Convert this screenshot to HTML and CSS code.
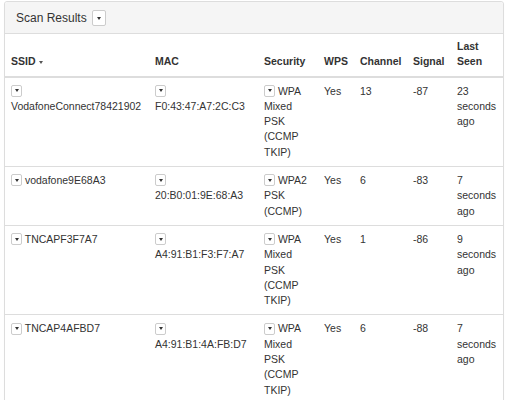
FILE: index.html
```html
<!DOCTYPE html>
<html>
<head>
<meta charset="utf-8">
<link rel="stylesheet" href="styles.css">
</head>
<body>
<div class="page">
  <div class="panel">
    <div class="panel-heading">
      <span class="title">Scan Results</span>
      <span class="btn btn-lg"><span class="caret"></span></span>
    </div>
    <table class="table">
      <colgroup>
        <col class="c-ssid"><col class="c-mac"><col class="c-sec"><col class="c-wps"><col class="c-ch"><col class="c-sig"><col class="c-seen">
      </colgroup>
      <thead>
        <tr>
          <th>SSID <span class="caret sort"></span></th>
          <th>MAC</th>
          <th>Security</th>
          <th>WPS</th>
          <th>Channel</th>
          <th>Signal</th>
          <th>Last Seen</th>
        </tr>
      </thead>
      <tbody>
        <tr>
          <td><span class="btn"><span class="caret"></span></span> VodafoneConnect78421902</td>
          <td><span class="btn"><span class="caret"></span></span> F0:43:47:A7:2C:C3</td>
          <td><span class="btn"><span class="caret"></span></span> WPA Mixed PSK (CCMP TKIP)</td>
          <td>Yes</td>
          <td>13</td>
          <td>-87</td>
          <td>23 seconds ago</td>
        </tr>
        <tr>
          <td><span class="btn"><span class="caret"></span></span> vodafone9E68A3</td>
          <td><span class="btn"><span class="caret"></span></span> 20:B0:01:9E:68:A3</td>
          <td><span class="btn"><span class="caret"></span></span> WPA2 PSK (CCMP)</td>
          <td>Yes</td>
          <td>6</td>
          <td>-83</td>
          <td>7 seconds ago</td>
        </tr>
        <tr>
          <td><span class="btn"><span class="caret"></span></span> TNCAPF3F7A7</td>
          <td><span class="btn"><span class="caret"></span></span> A4:91:B1:F3:F7:A7</td>
          <td><span class="btn"><span class="caret"></span></span> WPA Mixed PSK (CCMP TKIP)</td>
          <td>Yes</td>
          <td>1</td>
          <td>-86</td>
          <td>9 seconds ago</td>
        </tr>
        <tr>
          <td><span class="btn"><span class="caret"></span></span> TNCAP4AFBD7</td>
          <td><span class="btn"><span class="caret"></span></span> A4:91:B1:4A:FB:D7</td>
          <td><span class="btn"><span class="caret"></span></span> WPA Mixed PSK (CCMP TKIP)</td>
          <td>Yes</td>
          <td>6</td>
          <td>-88</td>
          <td>7 seconds ago</td>
        </tr>
      </tbody>
    </table>
  </div>
</div>
</body>
</html>
```
FILE: styles.css
```css
html, body {
  margin: 0;
  padding: 0;
  background: #fff;
}
body {
  font-family: "Liberation Sans", Arial, Helvetica, sans-serif;
  font-size: 10.5px;
  line-height: 15.3px;
  color: #333;
}
.page {
  box-sizing: border-box;
  height: 400px;
  padding: 1px 1px 0 4px;
  overflow: hidden;
}
.panel {
  border: 1px solid #ddd;
  border-radius: 3px;
  background: #fff;
  box-shadow: 0 1px 1px rgba(0,0,0,0.05);
}
.panel-heading {
  display: flex;
  align-items: center;
  gap: 5px;
  padding: 8px 11px 7px;
  height: 16px;
  background: #f5f5f5;
  border-bottom: 1px solid #ddd;
  border-radius: 3px 3px 0 0;
}
.title {
  font-size: 12px;
  line-height: 16px;
  color: #333;
}
.btn {
  display: inline-flex;
  align-items: center;
  justify-content: center;
  box-sizing: border-box;
  width: 11px;
  height: 12px;
  border: 1px solid #ccc;
  border-radius: 2px;
  background: #fff;
  vertical-align: middle;
  margin-top: -2px;
}
.btn-lg {
  width: 14px;
  height: 16px;
  margin-top: 0;
}
.caret {
  display: inline-block;
  width: 0;
  height: 0;
  border-top: 3px solid #333;
  border-left: 2.5px solid transparent;
  border-right: 2.5px solid transparent;
}
.caret.sort {
  vertical-align: middle;
  margin-left: 1px;
  margin-top: -1px;
  border-top-color: #555;
}
.table {
  width: 100%;
  table-layout: fixed;
  border-collapse: collapse;
  border-spacing: 0;
}
.c-ssid { width: 144px; }
.c-mac { width: 109px; }
.c-sec { width: 60px; }
.c-wps { width: 36px; }
.c-ch { width: 53px; }
.c-sig { width: 44px; }
.c-seen { width: 52px; }
.table th {
  text-align: left;
  font-weight: bold;
  vertical-align: bottom;
  padding: 5px 6px 6px;
  border-bottom: 2px solid #ddd;
}
.table td {
  vertical-align: top;
  padding: 6px 5px 6px 6px;
  border-top: 1px solid #ddd;
}
.table tbody tr:first-child td {
  border-top: 0;
}
```
